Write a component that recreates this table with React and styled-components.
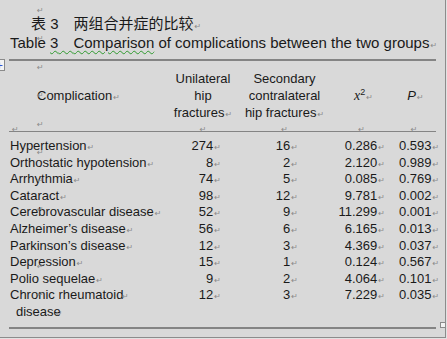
import React from 'react'
import styled, { createGlobalStyle } from 'styled-components'

const GlobalStyle = createGlobalStyle`
  html, body {
    margin: 0;
    padding: 0;
    background: #e2e2e2;
  }
  body {
    font-family: "Liberation Sans", Arial, sans-serif;
    color: #1a1a1a;
  }
`

const Page = styled.div`
  position: relative;
  box-sizing: border-box;
  width: 446px;
  height: 338px;
  padding: 0 9px;
  overflow: hidden;
  background: #d9d9d9;
  border-right: 1px solid #8c8c8c;
  border-bottom: 1px solid #8c8c8c;
`

const Mark = styled.span`
  display: inline-block;
  margin-left: 1px;
  font-family: "DejaVu Sans", sans-serif;
  font-size: 8px;
  font-style: normal;
  line-height: 8px;
  color: #8a8a8a;
  vertical-align: baseline;
`

const CnTitle = styled.div`
  margin-top: 13px;
  padding-left: 22px;
  font-family: "Liberation Sans", "Noto Sans CJK SC", sans-serif;
  font-size: 15px;
  line-height: 21px;
  height: 21px;
`

const EnTitle = styled.div`
  padding-left: 1px;
  font-size: 15px;
  line-height: 17px;
  white-space: nowrap;
`

const Squiggle = styled.span`
  font-family: "Liberation Sans", "Noto Sans CJK SC", sans-serif;
  text-decoration: underline wavy #2f9a2f;
  text-decoration-thickness: 1px;
  text-underline-offset: 2px;
`

const Table = styled.div`
  margin-top: 8px;
  width: 427px;
  font-size: 13px;
`

const Rule = styled.div`
  height: ${p => p.$size}px;
  background: #848484;
`

const Row = styled.div`
  display: grid;
  grid-template-columns: 159px 70px 93px 61px 44px;
  align-items: ${p => p.$align || 'start'};
  line-height: ${p => p.$lh || 17}px;
  white-space: nowrap;
`

const HeadRow = styled(Row)`
  padding-top: 9px;
`

const HeadCell = styled.div`
  text-align: ${p => p.$align || 'center'};
  padding-left: ${p => p.$pl || 0}px;
`

const Sym = styled.span`
  font-family: ${p => (p.$serif ? '"Liberation Serif", serif' : '"Liberation Sans", sans-serif')};
  font-style: italic;
  font-size: ${p => (p.$serif ? 14 : 13)}px;
`

const Sup = styled.sup`
  font-size: 9px;
  line-height: 0;
`

const MarkRow = styled(Row)`
  height: 10px;
  line-height: 10px;
  overflow: hidden;
`

const MarkCell = styled.div`
  text-align: ${p => (p.$left ? 'left' : 'center')};
  padding-left: ${p => (p.$left ? 3 : 0)}px;
  padding-top: 2px;
  & > span { margin-left: 0; }
`

const Body = styled.div`
  padding: 6px 0 6px;
`

const Label = styled.div`
  padding-left: ${p => (p.$wrap ? 7 : 1)}px;
  text-indent: ${p => (p.$wrap ? -6 : 0)}px;
`

const Num = styled.div`
  text-align: ${p => (p.$left ? 'left' : 'right')};
  padding-left: ${p => p.$pl || 0}px;
  padding-right: ${p => p.$pr || 0}px;
`

const MarkColumn = styled.div`
  position: absolute;
  left: 37px;
  top: -1px;
  display: flex;
  flex-direction: column;
`

const ColumnMark = styled.div`
  height: 28.4px;
  visibility: ${p => (p.$off ? 'hidden' : 'visible')};
  & > span { margin-left: 0; }
`

const MoveHandle = styled.div`
  position: absolute;
  left: -7px;
  top: 59px;
  width: 10px;
  height: 10px;
  background: #f3f3f3;
  border: 1px solid #8a8a8a;
  display: flex;
  align-items: center;
  justify-content: center;
`

const ResizeHandle = styled.div`
  position: absolute;
  left: 440px;
  top: 322px;
  width: 4px;
  height: 4px;
  background: #f2f2f2;
  border: 1px solid #8a8a8a;
`

const rows = [
  ['Hypertension', '274', '16', '0.286', '0.593'],
  ['Orthostatic hypotension', '8', '2', '2.120', '0.989'],
  ['Arrhythmia', '74', '5', '0.085', '0.769'],
  ['Cataract', '98', '12', '9.781', '0.002'],
  ['Cerebrovascular disease', '52', '9', '11.299', '0.001'],
  ['Alzheimer\u2019s disease', '56', '6', '6.165', '0.013'],
  ['Parkinson\u2019s disease', '12', '3', '4.369', '0.037'],
  ['Depression', '15', '1', '0.124', '0.567'],
  ['Polio sequelae', '9', '2', '4.064', '0.101'],
]

const P = () => <Mark>{'\u21b5'}</Mark>

export default function App() {
  return (
    <Page>
      <GlobalStyle />
      <CnTitle>
        表 3{'\u3000'}两组合并症的比较<P />
      </CnTitle>
      <EnTitle>
        Table <Squiggle>3{'\u3000'}Comparison</Squiggle> of complications between the two groups<P />
      </EnTitle>

      <Table>
        <Rule $size={2} />
        <HeadRow $align="center">
          <HeadCell $align="left" $pl={28}>
            Complication<P />
          </HeadCell>
          <HeadCell>
            Unilateral<br />hip<br />fractures<P />
          </HeadCell>
          <HeadCell>
            Secondary<br />contralateral<br />hip fractures<P />
          </HeadCell>
          <HeadCell $pl={4}>
            <Sym $serif>x</Sym>
            <Sup>2</Sup>
            <P />
          </HeadCell>
          <HeadCell $pl={3}>
            <Sym>P</Sym>
            <P />
          </HeadCell>
        </HeadRow>
        <MarkRow>
          <MarkCell $left><P /></MarkCell>
          <MarkCell><P /></MarkCell>
          <MarkCell><P /></MarkCell>
          <MarkCell><P /></MarkCell>
          <MarkCell><P /></MarkCell>
        </MarkRow>
        <Rule $size={1} />

        <Body>
          {rows.map(r => (
            <Row key={r[0]} $lh={16.6}>
              <Label>{r[0]}<P /></Label>
              <Num $pr={17}>{r[1]}<P /></Num>
              <Num $pr={33}>{r[2]}<P /></Num>
              <Num $pr={7}>{r[3]}<P /></Num>
              <Num $left $pl={7}>{r[4]}<P /></Num>
            </Row>
          ))}
          <Row $lh={16.6}>
            <Label $wrap>
              Chronic rheumatoid <P /><br />disease<P />
            </Label>
            <Num $pr={17}>12<P /></Num>
            <Num $pr={33}>3<P /></Num>
            <Num $pr={7}>7.229<P /></Num>
            <Num $left $pl={7}>0.035<P /></Num>
          </Row>
        </Body>
        <Rule $size={2} />
      </Table>

      <MarkColumn>
        {Array.from({ length: 11 }).map((_, i) => (
          <ColumnMark key={i} $off={i === 8}>
            <P />
          </ColumnMark>
        ))}
      </MarkColumn>

      <MoveHandle>
        <svg width="7" height="7" viewBox="0 0 7 7">
          <path d="M3.5 0.5 V6.5 M0.5 3.5 H6.5" stroke="#2a5bd7" strokeWidth="1.2" fill="none" />
        </svg>
      </MoveHandle>
      <ResizeHandle />
    </Page>
  )
}
